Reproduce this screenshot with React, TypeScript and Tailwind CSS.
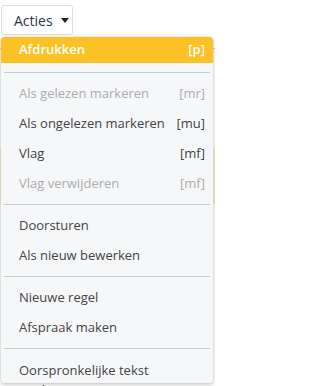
import { useState } from 'react'

type Item = { label: string; key?: string; disabled?: boolean; active?: boolean }

const groups: Item[][] = [
  [{ label: 'Afdrukken', key: '[p]', active: true }],
  [
    { label: 'Als gelezen markeren', key: '[mr]', disabled: true },
    { label: 'Als ongelezen markeren', key: '[mu]' },
    { label: 'Vlag', key: '[mf]' },
    { label: 'Vlag verwijderen', key: '[mf]', disabled: true },
  ],
  [{ label: 'Doorsturen' }, { label: 'Als nieuw bewerken' }],
  [{ label: 'Nieuwe regel' }, { label: 'Afspraak maken' }],
  [{ label: 'Oorspronkelijke tekst' }],
]

const MenuItem = ({ item, last }: { item: Item; last?: boolean }) => {
  let cls = 'h-[30px] text-[#444]'
  if (item.active) cls = 'h-[26px] bg-[#fcc125] text-white font-semibold rounded-t-[4px]'
  if (item.disabled) cls = 'h-[30px] text-[#acacac]'
  if (last) cls = 'h-[28px] pt-[3px] text-[#444]'

  return (
    <div className={`flex items-center justify-between pl-[18px] pr-[8px] ${cls}`}>
      <span>{item.label}</span>
      {item.key && <span>{item.key}</span>}
    </div>
  )
}

const App = () => {
  const [open] = useState(true)

  return (
    <div className="relative h-[386px] w-[215px] overflow-hidden bg-white font-['Segoe_UI','Open_Sans',sans-serif] text-[13px]">
      <div className="pt-[5px] pl-[1px]">
        <button className="flex h-[30px] w-[72px] items-center gap-[8px] rounded-[3px] border border-[#dedede] bg-white pl-[12px] text-[14px] text-[#2c3442]">
          Acties
          <svg width="8" height="5" viewBox="0 0 8 5" className="mt-[1px]">
            <path d="M0 0h8L4 5z" fill="#222" />
          </svg>
        </button>
      </div>

      {/* page content behind the menu */}
      <div className="mt-[13px] border-t border-[#d6d6d6]" />
      <div className="mt-[100px] h-[55px] bg-[#f6f3d0]" />
      <div className="mt-[176px] pl-[20px] text-[14px] text-[#333]">With</div>

      {open && (
        <div className="absolute left-[1px] top-[37px] w-[212px] rounded-[4px] bg-[#f6f7f9] shadow-[0_1px_4px_rgba(0,0,0,0.3)]">
          {groups.map((group, i) => (
            <div key={i}>
              {i > 0 && (
                <div className={`mx-[3px] mb-[6px] h-px bg-[#c9c9c9] ${i === 1 ? 'mt-[9px]' : 'mt-[5px]'}`} />
              )}
              {group.map((item) => (
                <MenuItem key={item.label} item={item} last={i === groups.length - 1} />
              ))}
            </div>
          ))}
        </div>
      )}
    </div>
  )
}

export default App
